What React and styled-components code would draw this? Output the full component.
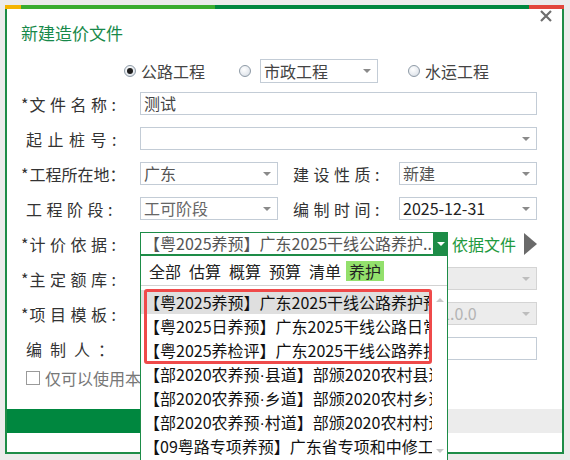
import React from 'react'
import styled, { createGlobalStyle } from 'styled-components'

const GlobalStyle = createGlobalStyle`
  html, body { margin: 0; height: 100%; overflow: hidden; }
  body {
    background: #ebebeb;
    font-family: "Noto Sans CJK SC", "Microsoft YaHei", sans-serif;
    font-size: 16px;
    color: #333;
  }
`

const stripe = [
  { w: 16, c: '#f4b400' },
  { w: 194, c: '#3aac2f' },
  { w: 314, c: '#00873f' },
  { w: 35, c: '#e2463b' },
]

const tabs = ['全部', '估算', '概算', '预算', '清单', '养护']

const items = [
  '【粤2025养预】广东2025干线公路养护预算定额',
  '【粤2025日养预】广东2025干线公路日常养护',
  '【粤2025养检评】广东2025干线公路养护检测评定',
  '【部2020农养预·县道】部颁2020农村县道养护',
  '【部2020农养预·乡道】部颁2020农村乡道养护',
  '【部2020农养预·村道】部颁2020农村村道养护',
  '【09粤路专项养预】广东省专项和中修工程',
]

// the CJK font draws "·" full width, so it gets a latin face
const renderItem = text =>
  text.split('·').flatMap((part, i) => (i === 0 ? [part] : [<Dot key={i}>·</Dot>, part]))

const FormLabel = ({ star, children, ...rest }) => (
  <Label {...rest}>
    {star && <Star>*</Star>}
    {children}
  </Label>
)

const App = () => {
  return (
    <>
      <GlobalStyle />
      <Window>
        <Strip>
          {stripe.map((s, i) => (
            <StripPart key={i} w={s.w} c={s.c} />
          ))}
        </Strip>
        <Header>
          <Title>新建造价文件</Title>
          <Close viewBox="0 0 12 12">
            <path d="M1 1L11 11M11 1L1 11" />
          </Close>
        </Header>

        <RadioRow>
          <Radio>
            <RadioDot checked />
            <span>公路工程</span>
          </Radio>
          <Radio style={{ marginLeft: 34 }}>
            <RadioDot />
            <Field w={118} h={24} tone="#444" style={{ marginLeft: 4 }}>
              <FieldText>市政工程</FieldText>
              <Caret />
            </Field>
          </Radio>
          <Radio style={{ marginLeft: 30 }}>
            <RadioDot />
            <span>水运工程</span>
          </Radio>
        </RadioRow>

        <Form>
          <Row>
            <FormLabel star>文件名称:</FormLabel>
            <Field w={397} tone="#444">
              <FieldText>测试</FieldText>
            </Field>
          </Row>
          <Row>
            <FormLabel indent={5} sp={5.5}>起止桩号:</FormLabel>
            <Field w={397}>
              <FieldText />
              <Caret />
            </Field>
          </Row>
          <Row>
            <FormLabel star sp={0}>工程所在地：</FormLabel>
            <Field w={138}>
              <FieldText>广东</FieldText>
              <Caret />
            </Field>
            <FormLabel w={106} style={{ marginLeft: 15 }}>建设性质:</FormLabel>
            <Field w={138}>
              <FieldText>新建</FieldText>
              <Caret />
            </Field>
          </Row>
          <Row>
            <FormLabel indent={5}>工程阶段:</FormLabel>
            <Field w={138} tone="#666">
              <FieldText>工可阶段</FieldText>
              <Caret />
            </Field>
            <FormLabel w={106} style={{ marginLeft: 15 }}>编制时间:</FormLabel>
            <Field w={138} tone="#222">
              <FieldText>2025-12-31</FieldText>
              <Caret />
            </Field>
          </Row>
          <Row>
            <FormLabel star>计价依据:</FormLabel>
            <Anchor>
              <Field w={308} accent tone="#555">
                <FieldText>【粤2025养预】广东2025干线公路养护...</FieldText>
                <DropButton>
                  <Caret light />
                </DropButton>
              </Field>
              <Popup>
                <TabRow>
                  {tabs.map(t => (
                    <Tab key={t} active={t === '养护'}>{t}</Tab>
                  ))}
                </TabRow>
                <ListArea>
                  <List>
                    {items.map((it, i) => (
                      <Item key={it} selected={i === 0}>{renderItem(it)}</Item>
                    ))}
                  </List>
                  <ScrollTrack>
                    <ScrollArrow up />
                    <ScrollArrow />
                  </ScrollTrack>
                  <Marker />
                </ListArea>
              </Popup>
            </Anchor>
            <DocLink>依据文件</DocLink>
            <Play />
          </Row>
          <Row>
            <FormLabel star>主定额库:</FormLabel>
            <Field w={397} disabled>
              <FieldText />
              <Caret faded />
            </Field>
          </Row>
          <Row>
            <FormLabel star>项目模板:</FormLabel>
            <Field w={397} disabled tone="#b4b4b4">
              <FieldText>【养护】广东公路养护工程项目标准模板V1.0.0</FieldText>
              <Caret faded />
            </Field>
          </Row>
          <Row>
            <FormLabel indent={5} sp={8}>编制人：</FormLabel>
            <Field w={397}>
              <FieldText />
            </Field>
          </Row>
        </Form>

        <CheckRow>
          <CheckBox />
          <span>仅可以使用本单位模板</span>
        </CheckRow>

        <Bar>
          <BarFill style={{ width: '40%' }} />
        </Bar>
      </Window>
    </>
  )
}

const Window = styled.div`
  position: relative;
  box-sizing: border-box;
  margin: 5px 0 0 5px;
  width: 559px;
  height: 449px;
  background: #fff;
  border: 2px solid #1d8c47;
  border-top: none;
  display: flex;
  flex-direction: column;
`

const Strip = styled.div`
  display: flex;
  height: 4px;
  margin: 0 -2px;
`

const StripPart = styled.div`
  flex: none;
  width: ${p => p.w}px;
  background: ${p => p.c};
`

const Header = styled.div`
  display: flex;
  justify-content: space-between;
  align-items: flex-start;
  height: 50px;
`

const Title = styled.div`
  margin: 12px 0 0 14px;
  font-size: 17px;
  line-height: 24px;
  color: #17894a;
`

const Close = styled.svg`
  width: 12px;
  height: 12px;
  margin: 1px 10px 0 0;
  path {
    stroke: #6e6e6e;
    stroke-width: 2.2;
    fill: none;
  }
`

const RadioRow = styled.div`
  display: flex;
  align-items: center;
  height: 24px;
  padding-left: 117px;
`

const Radio = styled.label`
  display: flex;
  align-items: center;
  gap: 5px;
  color: #444;
  line-height: 24px;
`

const RadioDot = styled.span`
  box-sizing: border-box;
  flex: none;
  width: 12px;
  height: 12px;
  border-radius: 50%;
  border: 1px solid #8e9aa6;
  background: radial-gradient(circle at 40% 35%, #ffffff 0%, #e6eaef 60%, #c6ced8 100%);
  display: flex;
  align-items: center;
  justify-content: center;
  &::after {
    content: '';
    width: 6px;
    height: 6px;
    border-radius: 50%;
    background: ${p => (p.checked ? '#1e1e1e' : 'transparent')};
  }
`

const Form = styled.div`
  display: flex;
  flex-direction: column;
  gap: 12px;
  margin-top: 9px;
  padding-left: 14px;
`

const Row = styled.div`
  display: flex;
  align-items: center;
  height: 23px;
`

const Label = styled.span`
  flex: none;
  box-sizing: border-box;
  width: ${p => p.w || 119}px;
  padding-left: ${p => p.indent || 0}px;
  letter-spacing: ${p => (p.sp === undefined ? 4.5 : p.sp)}px;
  white-space: nowrap;
  color: #333;
`

const Star = styled.span`
  letter-spacing: 0;
  margin-right: 1px;
`

const Field = styled.div`
  box-sizing: border-box;
  flex: none;
  display: flex;
  align-items: center;
  width: ${p => p.w}px;
  height: ${p => p.h || 23}px;
  padding-left: 3px;
  border: 1px solid ${p => (p.accent ? '#1d8c47' : p.disabled ? '#d4d4d4' : '#c3ccd6')};
  background: ${p => (p.disabled ? '#ececec' : '#fff')};
  color: ${p => p.tone || '#555'};
  overflow: hidden;
`

const FieldText = styled.span`
  flex: 1;
  min-width: 0;
  white-space: nowrap;
  overflow: hidden;
  line-height: 21px;
`

const Caret = styled.span`
  flex: none;
  width: 0;
  height: 0;
  margin: 0 ${p => (p.light ? 3 : 6)}px 0 4px;
  border-left: 4px solid transparent;
  border-right: 4px solid transparent;
  border-top: 4px solid ${p => (p.light ? '#fff' : p.faded ? '#bdbdbd' : '#8a8a8a')};
`

const DropButton = styled.span`
  flex: none;
  align-self: stretch;
  display: flex;
  align-items: center;
  width: 14px;
  background: #1d8c47;
`

const Anchor = styled.div`
  position: relative;
  flex: none;
`

const DocLink = styled.span`
  margin-left: 4px;
  color: #1f9a40;
  white-space: nowrap;
`

const Play = styled.span`
  width: 0;
  height: 0;
  margin-left: 8px;
  border-left: 13px solid #6a6a6a;
  border-top: 11px solid transparent;
  border-bottom: 11px solid transparent;
`

const Popup = styled.div`
  position: absolute;
  z-index: 5;
  top: 100%;
  left: 0;
  box-sizing: border-box;
  width: 308px;
  height: 210px;
  background: #fff;
  border: 1px solid #1d8c47;
  display: flex;
  flex-direction: column;
`

const TabRow = styled.div`
  display: flex;
  align-items: center;
  gap: 2px;
  flex: none;
  height: 29px;
  padding-left: 5px;
  border-bottom: 1px solid #d2d2d2;
  color: #222;
`

const Tab = styled.span`
  padding: 0 3px;
  line-height: 20px;
  background: ${p => (p.active ? '#93e06c' : 'transparent')};
`

const ListArea = styled.div`
  position: relative;
  flex: 1;
  display: flex;
  min-height: 0;
`

const List = styled.div`
  width: 291px;
  padding-top: 4px;
  overflow: hidden;
`

const Item = styled.div`
  height: 24px;
  line-height: 24px;
  padding-left: 3px;
  white-space: nowrap;
  overflow: hidden;
  color: #111;
  background: ${p => (p.selected ? '#dfdfdf' : 'transparent')};
`

const Dot = styled.span`
  font-family: "Liberation Sans", sans-serif;
`

const ScrollTrack = styled.div`
  flex: 1;
  display: flex;
  flex-direction: column;
  justify-content: space-between;
  align-items: center;
  padding: 12px 0 11px;
`

const ScrollArrow = styled.span`
  width: 0;
  height: 0;
  border-left: 4px solid transparent;
  border-right: 4px solid transparent;
  ${p => (p.up ? 'border-bottom' : 'border-top')}: 4px solid #c9c9c9;
`

const Marker = styled.div`
  position: absolute;
  left: 3px;
  top: 3px;
  box-sizing: border-box;
  width: 288px;
  height: 75px;
  border: 3px solid #ef4a4a;
  border-radius: 3px;
  pointer-events: none;
`

const CheckRow = styled.div`
  display: flex;
  align-items: center;
  gap: 5px;
  height: 20px;
  margin-top: 8px;
  padding-left: 19px;
  color: #777;
  white-space: nowrap;
`

const CheckBox = styled.span`
  box-sizing: border-box;
  width: 14px;
  height: 14px;
  border: 1px solid #9a9a9a;
  background: #fff;
`

const Bar = styled.div`
  display: flex;
  height: 24px;
  margin-top: auto;
  margin-bottom: 19px;
  background: #ececec;
`

const BarFill = styled.div`
  background: #00873f;
`

export default App
